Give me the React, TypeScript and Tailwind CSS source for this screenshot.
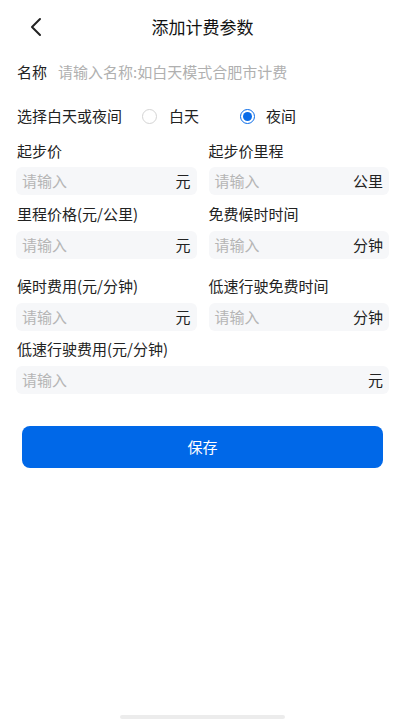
import React from "react";

const font = { fontFamily: '"Noto Sans CJK SC", "Noto Sans", sans-serif' };

function Field({ unit }: { unit: string }) {
  return (
    <div className="flex h-[28px] items-center justify-between rounded-md bg-[#f6f7f9] px-[6px]">
      <span className="text-[15px] text-[#b5b5b5]">请输入</span>
      <span className="text-[15px] text-[#222]">{unit}</span>
    </div>
  );
}

function Radio({ checked }: { checked?: boolean }) {
  return checked ? (
    <span className="flex h-[15px] w-[15px] shrink-0 items-center justify-center rounded-full border-[1.5px] border-[#0a6ce8]">
      <span className="h-[9px] w-[9px] rounded-full bg-[#0a6ce8]" />
    </span>
  ) : (
    <span className="block h-[15px] w-[15px] shrink-0 rounded-full border border-[#d4d4d4]" />
  );
}

export default function App() {
  return (
    <div className="flex h-[720px] w-[405px] flex-col bg-white text-[#222]" style={font}>
      {/* header */}
      <div className="relative flex h-[54px] items-center justify-center">
        <svg
          className="absolute left-[28px] top-[17px]"
          width="16"
          height="20"
          viewBox="0 0 16 20"
          fill="none"
        >
          <path d="M12 2 L4 10 L12 18" stroke="#222" strokeWidth="2" strokeLinecap="round" strokeLinejoin="round" />
        </svg>
        <span className="text-[17px] text-[#111]">添加计费参数</span>
      </div>

      <div className="px-4">
        <div className="mt-[8px] flex h-[20px] items-center text-[15px]">
          <span className="ml-[1px]">名称</span>
          <span className="ml-[11px] text-[#b0b0b0]">请输入名称:如白天模式合肥市计费</span>
        </div>

        <div className="mt-[24px] flex h-[20px] items-center text-[15px]">
          <span className="ml-[1px]">选择白天或夜间</span>
          <span className="ml-[20px] flex"><Radio /></span>
          <span className="ml-[12px]">白天</span>
          <span className="ml-[41px] flex"><Radio checked /></span>
          <span className="ml-[11px]">夜间</span>
        </div>

        <div className="mt-[15px] grid grid-cols-2 gap-x-3 text-[15px]">
          <div>
            <div className="ml-[1px] h-[20px] leading-[20px]">起步价</div>
            <div className="mt-[6px]"><Field unit="元" /></div>
          </div>
          <div>
            <div className="h-[20px] leading-[20px]">起步价里程</div>
            <div className="mt-[6px]"><Field unit="公里" /></div>
          </div>

          <div className="mt-[9px]">
            <div className="ml-[1px] h-[20px] leading-[20px]">里程价格(元/公里)</div>
            <div className="mt-[7px]"><Field unit="元" /></div>
          </div>
          <div className="mt-[9px]">
            <div className="h-[20px] leading-[20px]">免费候时时间</div>
            <div className="mt-[7px]"><Field unit="分钟" /></div>
          </div>

          <div className="mt-[17px]">
            <div className="ml-[1px] h-[20px] leading-[20px]">候时费用(元/分钟)</div>
            <div className="mt-[7px]"><Field unit="元" /></div>
          </div>
          <div className="mt-[17px]">
            <div className="h-[20px] leading-[20px]">低速行驶免费时间</div>
            <div className="mt-[7px]"><Field unit="分钟" /></div>
          </div>

          <div className="col-span-2 mt-[8px]">
            <div className="ml-[1px] h-[20px] leading-[20px]">低速行驶费用(元/分钟)</div>
            <div className="mt-[7px]"><Field unit="元" /></div>
          </div>
        </div>

        <button className="mx-[6px] mt-[32px] flex h-[42px] w-[361px] items-center justify-center rounded-lg bg-[#0068e8] text-[15px] text-white">
          保存
        </button>
      </div>

      <div className="mt-auto mb-[1px] flex justify-center">
        <div className="h-[4px] w-[165px] rounded-full bg-[#ececec]" />
      </div>
    </div>
  );
}
